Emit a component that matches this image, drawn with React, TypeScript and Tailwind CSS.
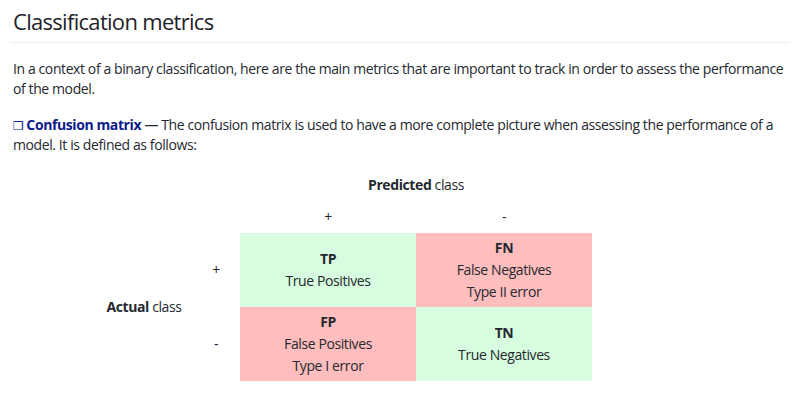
const cells = [
  { abbr: "TP", lines: ["True Positives"], bg: "bg-[#d8fcdf]" },
  { abbr: "FN", lines: ["False Negatives", "Type II error"], bg: "bg-[#ffbdbd]" },
  { abbr: "FP", lines: ["False Positives", "Type I error"], bg: "bg-[#ffbdbd]" },
  { abbr: "TN", lines: ["True Negatives"], bg: "bg-[#d8fcdf]" },
];

const Cell = ({ abbr, lines, bg }: { abbr: string; lines: string[]; bg: string }) => (
  <div className={`${bg} h-[74px] flex flex-col items-center justify-center leading-[22px]`}>
    <span className="font-bold">{abbr}</span>
    {lines.map((l) => (
      <span key={l}>{l}</span>
    ))}
  </div>
);

const App = () => {
  return (
    <div className="w-[800px] h-[418px] bg-white text-[#24292f] font-['Open_Sans',sans-serif] overflow-hidden">
      <h2 className="mx-[10px] pl-[3px] pt-[6px] pb-[6px] text-[22px] leading-[30px] font-medium tracking-[-0.7px] border-b border-[#eaecef] text-[#1f2328]">
        Classification metrics
      </h2>

      <div className="pl-[13px] pr-[4px] text-[14px] leading-[20px] tracking-[-0.4px]">
        <p className="mt-[16px]">
          In a context of a binary classification, here are the main metrics that are important to track in order to assess the performance
          of the model.
        </p>
        <p className="mt-[16px]">
          <span className="text-[#0d1a8a] font-bold">
            <span className="font-['DejaVu_Sans'] font-normal text-[12px] leading-none mr-[3px]">❒</span>Confusion matrix
          </span>{" "}
          — The confusion matrix is used to have a more complete picture when assessing the performance of a model. It is defined as
          follows:
        </p>

        <div className="ml-[83px] mt-[19px] grid grid-cols-[96px_48px_176px_176px]">
          <div className="col-start-3 col-span-2 h-[22px] flex items-center justify-center">
            <span>
              <span className="font-bold">Predicted</span> class
            </span>
          </div>

          <div className="col-start-3 h-[37px] flex items-end justify-center pb-[6px]">+</div>
          <div className="h-[37px] flex items-end justify-center pb-[6px]">-</div>

          <div className="row-span-2 flex items-center justify-center">
            <span>
              <span className="font-bold">Actual</span> class
            </span>
          </div>
          <div className="flex items-center justify-center">+</div>
          <Cell {...cells[0]} />
          <Cell {...cells[1]} />

          <div className="flex items-center justify-center">-</div>
          <Cell {...cells[2]} />
          <Cell {...cells[3]} />
        </div>
      </div>
    </div>
  );
};

export default App;
